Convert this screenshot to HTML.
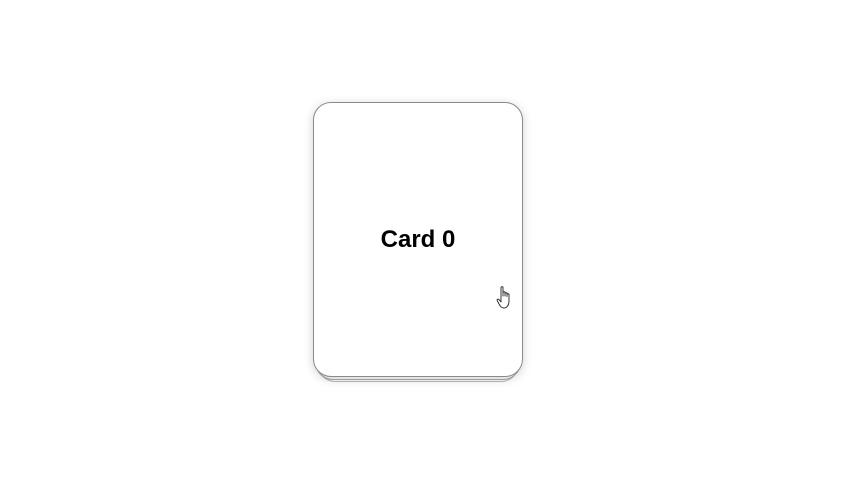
<!DOCTYPE html>
<html><head><style>
html,body{margin:0;padding:0;background:#fff;width:854px;height:480px;overflow:hidden}
.c{position:absolute;background:#fff;border:1px solid #8a8a8a;border-radius:18px;box-sizing:border-box}
.t{position:absolute;left:313px;top:102px;width:210px;height:275px;box-shadow:0 2px 10px rgba(0,0,0,0.18);display:flex;align-items:center;justify-content:center;font:bold 24px "Liberation Sans",sans-serif;color:#000}
</style></head><body>
<div class="c" style="left:317px;top:108px;width:202px;height:274px;border-color:#bbb"></div>
<div class="c" style="left:315px;top:105px;width:206px;height:275px;border-color:#aaa"></div>
<div class="c t">Card 0</div>
<svg style="position:absolute;left:496px;top:285px" width="20" height="26" viewBox="0 0 20 26">
<path d="M5 2.5 C5 1.5 7 1.5 7 2.5 L7 11 L7 7.5 C7 6.5 9 6.5 9 7.5 L9 11 L9 8.5 C9 7.5 11 7.5 11 8.5 L11 11.5 L11 9.5 C11 8.5 13 8.5 13 9.5 L13 16 C13 20 11 23 8 23 C5.5 23 4.5 21.5 3 19 L1.2 15.5 C0.7 14.5 2 13.5 3 14.5 L5 17 Z" fill="#fff" stroke="#222" stroke-width="0.9" stroke-linejoin="round"/>
</svg>
</body></html>
